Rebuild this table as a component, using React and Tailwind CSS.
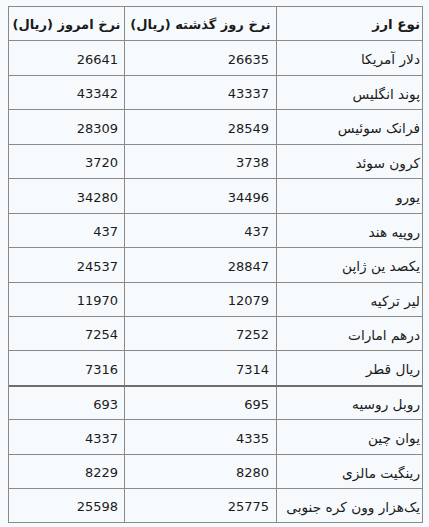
import React from "react";

const rows = [
  ["دلار آمریکا", "26635", "26641", "h-[35px]"],
  ["پوند انگلیس", "43337", "43342", "h-[34px]"],
  ["فرانک سوئیس", "28549", "28309", "h-[35px]"],
  ["کرون سوئد", "3738", "3720", "h-[34px]"],
  ["یورو", "34496", "34280", "h-[35px]"],
  ["روپیه هند", "437", "437", "h-[34px]"],
  ["یکصد ین ژاپن", "28847", "24537", "h-[35px]"],
  ["لیر ترکیه", "12079", "11970", "h-[34px]"],
  ["درهم امارات", "7252", "7254", "h-[34px]"],
  ["ریال قطر", "7314", "7316", "h-[35px]"],
  ["روبل روسیه", "695", "693", "h-[34px]"],
  ["یوان چین", "4335", "4337", "h-[35px]"],
  ["رینگیت مالزی", "8280", "8229", "h-[34px]"],
  ["یک‌هزار وون کره جنوبی", "25775", "25598", "h-[34px]"],
];

export default function App() {
  return (
    <div
      className="w-[429px] h-[527px] bg-[#f7fafd] pt-[6px] pl-[8px] text-[#1b1b1b] text-[13px]"
      style={{ fontFamily: '"DejaVu Sans", Tahoma, sans-serif' }}
    >
      <div dir="rtl" className="w-[415px] border-x border-b border-[#8a8a8a]">
        <div className="grid grid-cols-[146px_152px_115px] h-[34px] border-t border-[#8a8a8a] font-bold">
          <div className="flex items-center pr-[2px] pt-[2px] border-l border-[#8a8a8a] text-[13.5px]">نوع ارز</div>
          <div className="flex items-center justify-center pt-[2px] border-l border-[#8a8a8a]">نرخ روز گذشته (ریال)</div>
          <div className="flex items-center justify-center pt-[2px]">نرخ امروز (ریال)</div>
        </div>
        {rows.map((r, i) => (
          <div
            key={i}
            className={`grid grid-cols-[146px_152px_115px] ${r[3]} ${i === 10 ? "border-t-2 border-[#6f6f6f]" : "border-t border-[#8a8a8a]"}`}
          >
            <div className="flex items-center pr-[2px] pt-[3px] border-l border-[#8a8a8a] whitespace-nowrap text-[13.7px]">{r[0]}</div>
            <div className="flex items-center pr-[7px] pt-[3px] border-l border-[#8a8a8a]">{r[1]}</div>
            <div className="flex items-center pr-[6px] pt-[3px]">{r[2]}</div>
          </div>
        ))}
      </div>
    </div>
  );
}
